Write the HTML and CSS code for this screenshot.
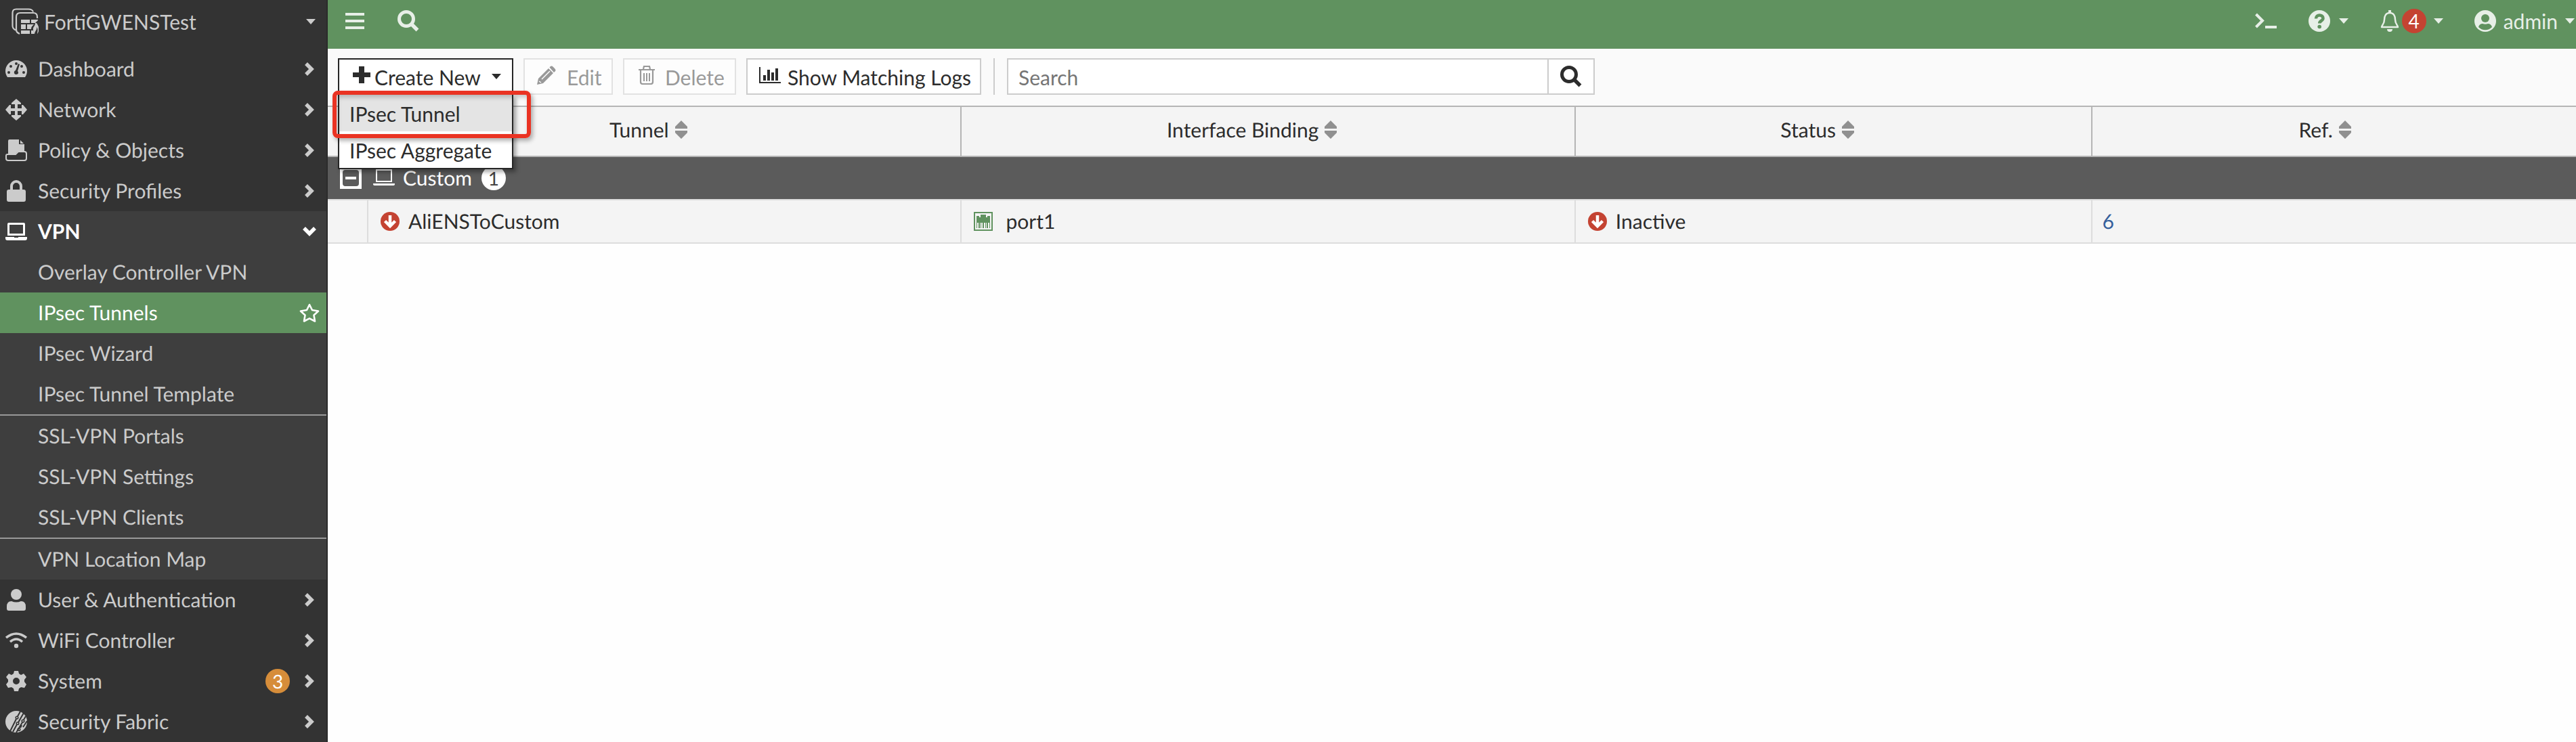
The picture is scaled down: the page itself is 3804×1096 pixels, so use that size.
FILE: index.html
```html
<!DOCTYPE html>
<html lang="en">
<head>
<meta charset="utf-8">
<title>FortiGWENSTest - IPsec Tunnels</title>
<link rel="stylesheet" href="styles.css">
</head>
<body>
<svg class="sprite" aria-hidden="true">
  <symbol id="chevron" viewBox="0 0 14 20"><path d="M2 2l8 8-8 8" fill="none" stroke="currentColor" stroke-width="5.500"/></symbol>
  <symbol id="caret" viewBox="0 0 14 8"><path d="M0 0h14L7 8z"/></symbol>
  <symbol id="laptop" viewBox="0 0 32 26"><path fill-rule="evenodd" d="M5 0h22a2 2 0 0 1 2 2v17H3V2a2 2 0 0 1 2-2zm1 3v13h20V3zM0 21h13v1h6v-1h13v2a3 3 0 0 1-3 3H3a3 3 0 0 1-3-3z"/></symbol>
  <symbol id="search" viewBox="0 0 32 32"><circle cx="13" cy="13" r="10.500" fill="none" stroke="currentColor" stroke-width="5"/><path d="m21 21 8.500 8.500" stroke="currentColor" stroke-width="5.500"/></symbol>
  <symbol id="down" viewBox="0 0 28 28"><circle cx="14" cy="14" r="14" fill="#c44332"/><path d="M14 5v15M6.500 13.500l7.500 7.500 7.500-7.500" fill="none" stroke="#fff" stroke-width="4.500"/></symbol>
  <symbol id="sort" viewBox="0 0 18 28"><path d="M9 0l9 9v3H0V9zM0 15h18v3l-9 9-9-9z"/></symbol>
</svg>
<div class="app">
  <nav class="side">
    <button class="host"><svg class="host-icon" viewBox="0 0 40 40"><path d="M6 32.500C3 31 1.500 29 1.500 26V7c0-4 2-5.500 5.500-5.500h18c4 0 6 1 7 4M12 38c-4-2-5-3-5-7V13c0-4 2-6 6-6h19c4 0 6 2 6 6v2" fill="none" stroke="currentColor" stroke-width="2.200"/><path d="M14 17h13v5H14zM29 17h10v1l-4 4h-6zM14 24h7v7h-7zM23 24h10c-3 3-4 4-4 7h-6zM14 33h13v5H14zM29 33h3l2 5h-5zM35 22c0 5-4 6-3 10 0 3 2 5 2 6 1-5 4-6 3-10 3 3 1 7 1 10 3-4 4-9-1-16z"/></svg><span class="grow">FortiGWENSTest</span><svg class="caret"><use href="#caret"/></svg></button>
    <a class="item" href="#"><svg class="icon" viewBox="0 0 32 32"><path fill-rule="evenodd" d="M3 28C1 25 0 22 0 19a16 16 0 0 1 32 0c0 3-1 6-3 9zM16 6a2 2 0 1 0 0 4 2 2 0 0 0 0-4zM8 10a2 2 0 1 0 0 4 2 2 0 0 0 0-4zm16 0a2 2 0 1 0 0 4 2 2 0 0 0 0-4zM5 19a2 2 0 1 0 0 4 2 2 0 0 0 0-4zm22 0a2 2 0 1 0 0 4 2 2 0 0 0 0-4zM19 8l-4 10c-3 1-3 6 1 6 3 0 4-3 2-5l3-10z"/></svg><span class="grow">Dashboard</span><svg class="chev"><use href="#chevron"/></svg></a>
    <a class="item" href="#"><svg class="icon" viewBox="0 0 32 32"><path d="M16 0l7 6v2h-5v6h6V9h2l6 7-6 7h-2v-5h-6v6h5v2l-7 6-7-6v-2h5v-6H8v5H6l-6-7 6-7h2v5h6V8H9V6z"/></svg><span class="grow">Network</span><svg class="chev"><use href="#chevron"/></svg></a>
    <a class="item" href="#"><svg class="icon" viewBox="0 0 32 32"><path d="M4 2Q4 0 6 0h14v7h8v11H18l-4 4H4z"/><path d="M22 1l5 5h-5z"/><path d="M3 22h12l4-4h9q3 0 3 3v7q0 3-3 3H4q-3 0-3-3v-4q0-2 2-2z" fill="#333" stroke="currentColor" stroke-width="2"/></svg><span class="grow">Policy &amp; Objects</span><svg class="chev"><use href="#chevron"/></svg></a>
    <a class="item" href="#"><svg class="icon" viewBox="0 0 32 32"><path fill-rule="evenodd" d="M5 14h2V9a9 9 0 0 1 18 0v5h2q3 0 3 3v12q0 3-3 3H5q-3 0-3-3V17q0-3 3-3zm6 0h10V9a5 5 0 0 0-10 0z"/></svg><span class="grow">Security Profiles</span><svg class="chev"><use href="#chevron"/></svg></a>
    <div class="open">
      <a class="item current" href="#"><svg class="icon laptop"><use href="#laptop"/></svg><span class="grow">VPN</span><svg class="chev chev-open" viewBox="0 0 20 14"><path d="M2 2l8 8 8-8" fill="none" stroke="currentColor" stroke-width="5.500"/></svg></a>
      <a class="item sub" href="#">Overlay Controller VPN</a>
      <a class="item sub active" href="#"><span class="grow">IPsec Tunnels</span><svg class="star" viewBox="0 0 30 28"><path d="M15 2l4 8 9 1.500-6.500 6 1.500 9-8-4.200-8 4.200 1.500-9L2 11.500 11 10z" fill="none" stroke="currentColor" stroke-width="2.600" stroke-linejoin="round"/></svg></a>
      <a class="item sub" href="#">IPsec Wizard</a>
      <a class="item sub" href="#">IPsec Tunnel Template</a>
      <hr>
      <a class="item sub" href="#">SSL-VPN Portals</a>
      <a class="item sub" href="#">SSL-VPN Settings</a>
      <a class="item sub" href="#">SSL-VPN Clients</a>
      <hr>
      <a class="item sub" href="#">VPN Location Map</a>
    </div>
    <a class="item" href="#"><svg class="icon" viewBox="0 0 32 32"><circle cx="16" cy="8" r="8"/><path d="M9 18q7 3 14 0 7 0 7 8v3q0 3-3 3H5q-3 0-3-3v-3q0-8 7-8z"/></svg><span class="grow">User &amp; Authentication</span><svg class="chev"><use href="#chevron"/></svg></a>
    <a class="item" href="#"><svg class="icon" viewBox="0 0 32 32"><path d="M1 12q15-12 30 0M7 18q9-8 18 0" fill="none" stroke="currentColor" stroke-width="3.500"/><circle cx="16" cy="24" r="3.200"/></svg><span class="grow">WiFi Controller</span><svg class="chev"><use href="#chevron"/></svg></a>
    <a class="item" href="#"><svg class="icon" viewBox="0 0 32 32"><path fill-rule="evenodd" d="M13 1h6l1 4 3 2 4-2 4 5-3 4v3l3 4-3 5-5-1-3 2-1 4h-6l-1-4-3-2-5 1-3-5 3-4v-3l-3-4 4-5 4 2 3-2zM16 11a5 5 0 1 0 0 10 5 5 0 0 0 0-10z"/></svg><span class="grow">System</span><span class="badge warn">3</span><svg class="chev"><use href="#chevron"/></svg></a>
    <a class="item" href="#"><svg class="icon" viewBox="0 0 32 32"><circle cx="16" cy="16" r="16"/><g fill="none" stroke="#333" stroke-width="2"><path d="M22 1l-4 7M16 12L7 30M27 3L19 17M17 20l-6 11M30 8l-3 5M25 17l-9 15M32 15l-6 9M24 21l-2 4"/><g stroke-width="1.500"><circle cx="17" cy="10" r="1.800"/><circle cx="26" cy="15" r="1.800"/><circle cx="18" cy="18.500" r="1.800"/><circle cx="20" cy="27.500" r="1.800"/></g></g></svg><span class="grow">Security Fabric</span><svg class="chev"><use href="#chevron"/></svg></a>
  </nav>
  <div class="content">
    <header class="top">
      <button class="plain" aria-label="Menu"><svg width="28" height="26" viewBox="0 0 28 26"><path d="M0 1h28v4H0zM0 11h28v4H0zM0 21h28v4H0z"/></svg></button>
      <button class="plain find" aria-label="Search"><svg width="32" height="32"><use href="#search"/></svg></button>
      <span class="grow"></span>
      <button class="plain cli" aria-label="CLI console"><svg width="32" height="24" viewBox="0 0 32 24"><path d="M1.500 2l9.500 9.500L1.500 21" fill="none" stroke="currentColor" stroke-width="4"/><path d="M15 19h17v4H15z"/></svg></button>
      <button class="plain help" aria-label="Help"><svg width="32" height="32" viewBox="0 0 32 32"><circle cx="16" cy="16" r="16"/><path d="M11 12.500c0-6.500 10.500-6.500 10.500-.5 0 4-5.300 3.500-5.300 7.500" fill="none" stroke="#60925f" stroke-width="4.500"/><circle cx="16.200" cy="24.500" r="2.800" fill="#60925f"/></svg><svg class="caret"><use href="#caret"/></svg></button>
      <button class="plain bell" aria-label="Notifications"><svg width="28" height="32" viewBox="0 0 28 32"><path d="M14 4C8 4 6 9 6 14c0 7-4 8-4 11h24c0-3-4-4-4-11 0-5-2-10-8-10z" fill="none" stroke="currentColor" stroke-width="2.500" stroke-linejoin="round"/><path d="M12 0h4v4h-4zM10 28h8a4 4 0 0 1-8 0z"/></svg><span class="badge alert">4</span><svg class="caret"><use href="#caret"/></svg></button>
      <button class="plain user"><svg width="32" height="32" viewBox="0 0 32 32"><circle cx="16" cy="16" r="16"/><circle cx="16" cy="12" r="6" fill="#60925f"/><path d="M6 25c1-4 4-5 6-5q4 1.500 8 0c2 0 5 1 6 5a14 14 0 0 1-20 0z" fill="#60925f"/></svg><span>admin</span><svg class="caret"><use href="#caret"/></svg></button>
    </header>
    <div class="toolbar">
      <div class="dropdown">
        <button class="btn create"><svg width="26" height="26" viewBox="0 0 26 26"><path d="M9 0h8v9h9v7h-9v9H9v-9H0V9h9z"/></svg><span>Create New</span><svg class="caret"><use href="#caret"/></svg></button>
        <div class="menu"><button class="option hover">IPsec Tunnel</button><button class="option">IPsec Aggregate</button></div>
        <div class="marker"></div>
      </div>
      <button class="btn edit" disabled><svg width="28" height="28" viewBox="0 0 28 28"><path d="M17 4l7 7L9 26l-9 2 2-9z"/><path d="M18.500 2.500Q21-1 24 2l2 2q3 3 0 5l-1 1z"/><path d="M7 20L19 8M3 23l3 2" stroke="#fdfdfd" stroke-width="1.500"/></svg><span>Edit</span></button>
      <button class="btn delete" disabled><svg width="26" height="28" viewBox="0 0 26 28"><path d="M1 6h24M8 5l1-4h8l1 4M4 7v17q0 3 3 3h12q3 0 3-3V7" fill="none" stroke="currentColor" stroke-width="2.200"/><path d="M9 11v12M13 11v12M17 11v12" stroke="currentColor" stroke-width="2"/></svg><span>Delete</span></button>
      <button class="btn logs"><svg width="32" height="24" viewBox="0 0 32 24"><path d="M0 0h2v22h30v2H0zM6 12h4v8H6zM12 4h4v16h-4zM18 8h4v12h-4zM24 2h4v18h-4z"/></svg><span>Show Matching Logs</span></button>
      <span class="divider"></span>
      <form class="search"><input type="search" placeholder="Search" aria-label="Search"><button type="button" aria-label="Search"><svg width="32" height="32"><use href="#search"/></svg></button></form>
    </div>
    <table>
      <colgroup><col class="c0"><col class="c1"><col class="c2"><col class="c3"><col></colgroup>
      <thead><tr><th></th>
        <th><span class="label">Tunnel<svg class="sort"><use href="#sort"/></svg></span></th>
        <th><span class="label">Interface Binding<svg class="sort"><use href="#sort"/></svg></span></th>
        <th><span class="label">Status<svg class="sort"><use href="#sort"/></svg></span></th>
        <th><span class="label">Ref.<svg class="sort"><use href="#sort"/></svg></span></th></tr></thead>
      <tbody>
        <tr class="group"><td colspan="5"><div class="cell"><button class="toggle" aria-label="Collapse"><svg width="32" height="32" viewBox="0 0 32 32"><path fill-rule="evenodd" d="M0 0h32v32H0zM8 4Q4 4 4 8v16q0 4 4 4h16q4 0 4-4V8q0-4-4-4zM8 14h16v4H8z"/></svg></button><svg class="lap" viewBox="0 0 32 26"><path d="M5 1h22v17H5z" fill="none" stroke="currentColor" stroke-width="2"/><path d="M0 21h32v1a2 2 0 0 1-2 2H2a2 2 0 0 1-2-2z"/></svg><span>Custom</span><span class="badge count">1</span></div></td></tr>
        <tr class="row"><td></td>
          <td><div class="cell"><svg class="mark"><use href="#down"/></svg>AliENSToCustom</div></td>
          <td><div class="cell port"><svg class="mark" viewBox="0 0 28 28"><g fill="#60925f"><path fill-rule="evenodd" d="M0 0h28v28H0zM2 2v24h24V2z"/><path d="M4 6h4v2h2V4h8v4h2V6h4v10H4zM4 16h1v8H4zM7 16h2v8H7zM10 16h1v8h-1zM13 16h2v8h-2zM17 16h1v8h-1zM19 16h2v8h-2zM23 16h1v8h-1z"/></g></svg>port1</div></td>
          <td><div class="cell"><svg class="mark"><use href="#down"/></svg>Inactive</div></td>
          <td><div class="cell ref"><a href="#">6</a></div></td></tr>
      </tbody>
    </table>
  </div>
</div>
</body>
</html>
```
FILE: styles.css
```css
* { box-sizing: border-box; }
body { margin: 0; background: #fefefe; color: #2c2c2c; font: 30px/36px Lato, "Liberation Sans", sans-serif; text-rendering: geometricPrecision; }
button, input { font: inherit; color: inherit; border-radius: 0; }
button { display: flex; align-items: center; border: 0; background: none; padding: 0; white-space: nowrap; }
svg { fill: currentColor; flex: none; display: block; }
.sprite { position: absolute; width: 0; height: 0; }
.grow { flex: 1; text-align: left; }
.caret { width: 14px; height: 8px; }
.app { display: flex; min-height: 100vh; }

.side { flex: none; width: 484px; background: #333; border-right: 2px solid #2b2b2b; color: #cbcbcb; }
.host { width: 100%; height: 72px; padding: 0 16px 8px 17px; gap: 8px; }
.host-icon { width: 40px; height: 40px; }
.item { display: flex; align-items: center; height: 60px; padding: 0 18px 0 8px; gap: 16px; color: inherit; text-decoration: none; }
.icon { width: 32px; height: 32px; }
.laptop { height: 26px; }
.chev { width: 14px; height: 20px; }
.chev-open { width: 20px; height: 14px; margin-right: -3px; }
.open { background: #3e3e3e; }
.current { color: #fff; font-weight: 700; }
.sub { padding: 0 10px 0 56px; }
.active { background: #60925f; color: #fff; }
.star { width: 30px; height: 28px; }
hr { margin: 0; border: 0; height: 2px; background: #999; }
.badge { display: flex; align-items: center; justify-content: center; min-width: 36px; height: 36px; border-radius: 18px; color: #fff; font-size: 28px; }
.warn { background: #d68d3a; margin-right: 6px; }
.alert { background: #c44332; }

.content { flex: 1; min-width: 0; }
.top { display: flex; height: 72px; padding: 0 2px 10px 26px; background: #60925f; color: #e7efe7; }
.find { margin-left: 49px; }
.help { margin-left: 47px; gap: 13px; }
.bell { margin-left: 47px; gap: 4px; }
.bell .caret { margin-left: 7px; }
.user { margin-left: 46px; gap: 11px; }

.toolbar { display: flex; align-items: center; gap: 15px; height: 86px; padding: 0 15px 2px; background: #fafafa; border-bottom: 2px solid #b5b5b5; }
.btn { height: 54px; padding: 2px 16px 0; border: 2px solid #ccc; background: #fff; }
.btn svg { margin-bottom: 6px; }
.btn:disabled { color: #999; border-color: #e2e2e2; background: #fdfdfd; }
.dropdown { position: relative; width: 259px; }
.create { width: 100%; padding: 2px 16px 0 20px; border-color: #262626; gap: 6px; }
.create .caret { margin: 0 0 2px auto; }
.edit { width: 132px; padding: 2px 0 0 18px; gap: 16px; }
.delete { width: 167px; padding: 2px 0 0 20px; gap: 14px; }
.logs { width: 347px; padding: 2px 0 0 17px; gap: 10px; }
.menu { position: absolute; z-index: 1; top: 100%; left: 0; right: 0; border: 2px solid #262626; border-top: 0; background: #fff; box-shadow: 4px 4px 6px rgba(0,0,0,.35); }
.option { width: 100%; height: 54px; padding: 2px 15px 0; }
.hover { background: #e4e4e4; }
.marker { position: absolute; z-index: 2; top: 48px; left: -8px; width: 293px; height: 70px; border: 6px solid #ea3323; border-radius: 8px; box-shadow: 3px 4px 6px rgba(0,0,0,.3), inset 2px 4px 6px rgba(0,0,0,.2); pointer-events: none; }
.divider { width: 2px; height: 54px; margin: 0 3px; background: #ccc; }
.search { display: flex; flex: 0 1 868px; height: 54px; border: 2px solid #ccc; background: #fff; }
.search input { flex: 1; min-width: 0; border: 0; padding: 2px 15px 0; background: none; outline: 0; }
.search input::placeholder { color: #757575; opacity: 1; }
.search button { width: 68px; justify-content: center; border-left: 2px solid #ccc; }

table { width: 100%; table-layout: fixed; border-collapse: separate; border-spacing: 0; }
.c0 { width: 60px; }
.c1 { width: 26.4%; }
.c2 { width: 27.3%; }
.c3 { width: 23%; }
th, td { padding: 0; font-weight: 400; text-align: left; }
th { height: 74px; padding: 0 48px 4px 0; background: #f4f4f4; border-right: 2px solid #b5b5b5; border-bottom: 2px solid #b5b5b5; }
th:last-child { padding-right: 28px; border-right: 0; }
.label { display: flex; justify-content: center; align-items: center; gap: 9px; }
.sort { width: 18px; height: 28px; color: #909090; }
.group td { height: 64px; background: #5b5b5b; color: #fff; border-bottom: 2px solid #ddd; }
.cell { display: flex; align-items: center; padding-left: 18px; gap: 13px; }
.group .cell { gap: 12px; }
.toggle { margin-right: 5px; }
.lap { width: 32px; height: 26px; }
.count { background: #fff; color: #444; margin-left: 2px; }
.port { gap: 19px; }
.ref { padding-left: 14px; }
.row td { height: 64px; background: #f4f4f4; border-right: 2px solid #ddd; border-bottom: 2px solid #ddd; }
.row td:last-child { border-right: 0; }
.mark { width: 28px; height: 28px; }
.cell a { color: #35609c; text-decoration: none; }
```
